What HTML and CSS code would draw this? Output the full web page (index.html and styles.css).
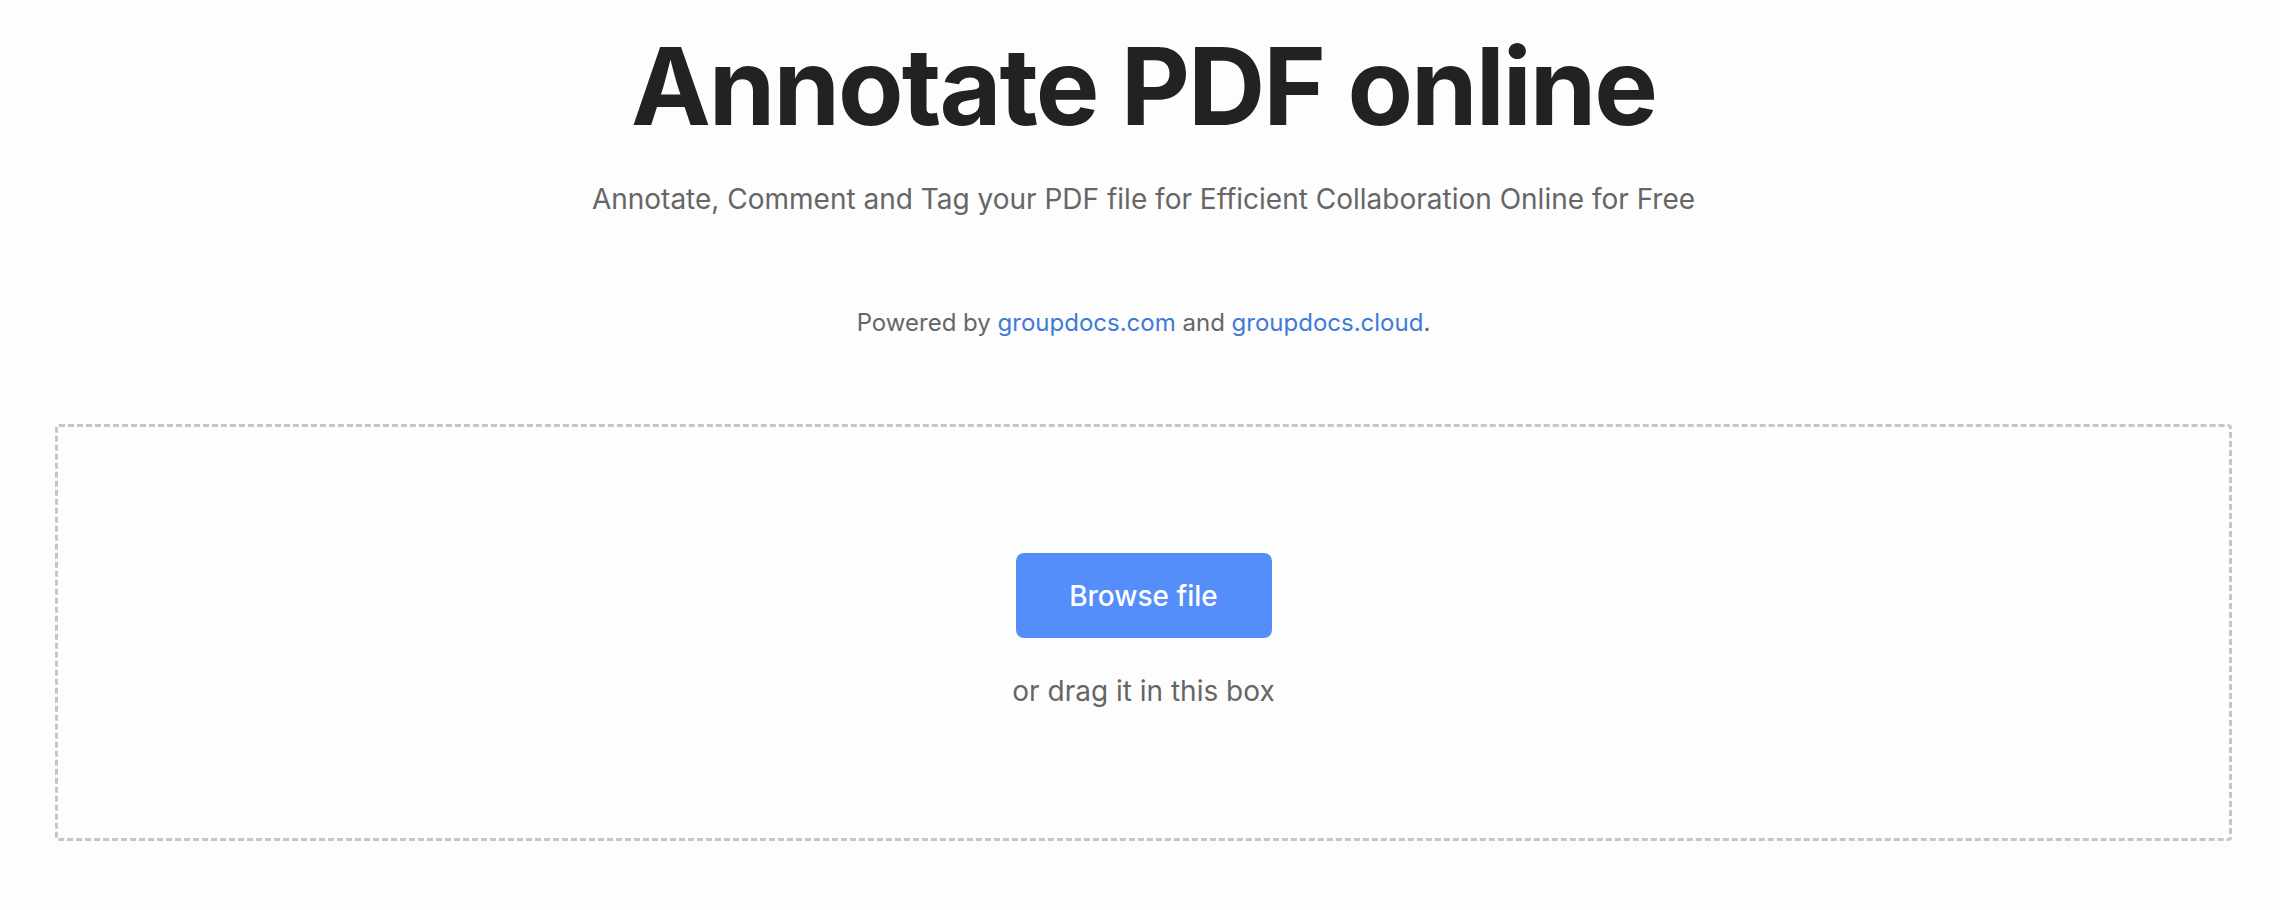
FILE: index.html
```html
<!DOCTYPE html>
<html lang="en">
<head>
<meta charset="utf-8">
<title>Annotate PDF online</title>
<link rel="stylesheet" href="styles.css">
</head>
<body>
<main class="page">
  <header class="hero">
    <h1 class="title">Annotate PDF online</h1>
    <p class="subtitle">Annotate, Comment and Tag your PDF file for Efficient Collaboration Online for Free</p>
    <p class="powered">Powered by <a href="#" class="link">groupdocs.com</a> and <a href="#" class="link">groupdocs.cloud</a>.</p>
  </header>
  <section class="dropzone">
    <button class="browse" type="button">Browse file</button>
    <p class="drag">or drag it in this box</p>
  </section>
</main>
</body>
</html>
```

FILE: styles.css
```css
html, body {
  margin: 0;
  padding: 0;
  background: #fdfdfd;
}
body {
  font-family: Inter, "Noto Sans", "Liberation Sans", sans-serif;
  color: #222;
}
.page {
  padding: 22px 48px 0 55px;
}
.hero {
  display: flex;
  flex-direction: column;
  align-items: center;
  text-align: center;
}
.title {
  margin: 0;
  font-size: 107px;
  line-height: 1.2;
  font-weight: 700;
  color: #222;
  letter-spacing: -2px;
}
.subtitle {
  margin: 28px 0 0;
  font-size: 28px;
  line-height: 1.5;
  color: #666;
}
.powered {
  margin: 85px 0 0;
  font-size: 24px;
  line-height: 1.5;
  color: #666;
}
.link {
  color: #3f7ad9;
  text-decoration: none;
}
.dropzone {
  margin-top: 83px;
  border: 3px dashed #c6c6c6;
  border-radius: 4px;
  padding: 126px 0 126px;
  display: flex;
  flex-direction: column;
  align-items: center;
}
.browse {
  width: 256px;
  height: 85px;
  border: 0;
  border-radius: 8px;
  background: #558dfb;
  color: #fff;
  font-family: Inter, "Noto Sans", sans-serif;
  font-size: 28px;
  font-weight: 500;
  cursor: pointer;
}
.drag {
  margin: 32px 0 0;
  font-size: 28px;
  line-height: 1.5;
  color: #666;
}
```
